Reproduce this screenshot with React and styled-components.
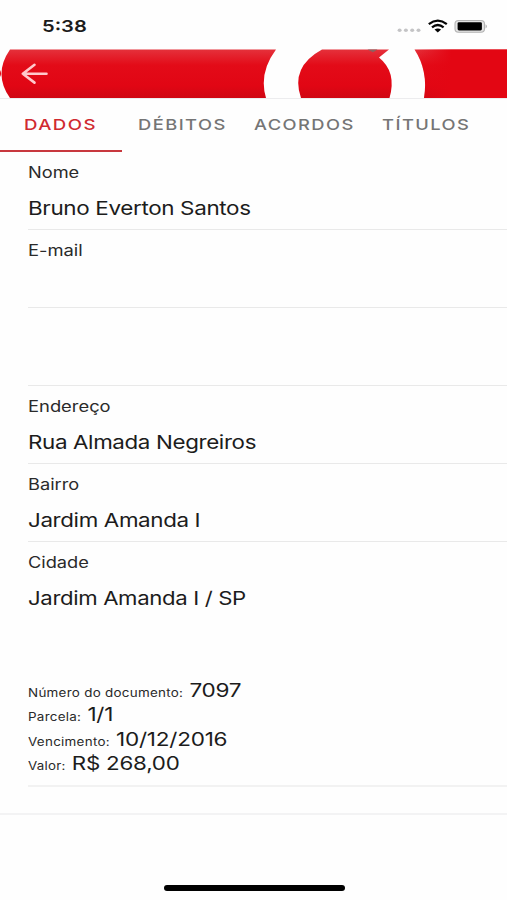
import React from 'react';
import styled, { createGlobalStyle } from 'styled-components';

const GlobalStyle = createGlobalStyle`
  * { box-sizing: border-box; }
  body { margin: 0; background: #fefefe; }
`;

const Screen = styled.div`
  width: 507px;
  height: 900px;
  display: flex;
  flex-direction: column;
  background: #fefefe;
  color: #1c1c1c;
  font-family: Inter, 'Liberation Sans', sans-serif;
  overflow: hidden;
`;

const StatusBar = styled.header`
  height: 49px;
  flex: none;
  display: flex;
  align-items: center;
  justify-content: space-between;
  padding: 3px 19px 0 42px;
`;

const Wide = styled.span`
  display: inline-block;
  white-space: nowrap;
  transform: scaleX(${(p) => p.$x || 1.2});
  transform-origin: ${(p) => p.$origin || 'left'} center;
`;

const Clock = styled(Wide)`
  font-size: 16.5px;
  font-weight: 600;
  line-height: 20px;
`;

const StatusIcons = styled.svg`
  display: block;
  width: 92px;
  height: 20px;
`;

const Banner = styled.div`
  height: 49px;
  flex: none;
`;

const BannerArt = styled.svg`
  display: block;
  width: 507px;
  height: 49px;
`;

const Tabs = styled.nav`
  height: 53.5px;
  flex: none;
  display: grid;
  grid-template-columns: repeat(4, 121.8px);
  border-top: 1px solid #ececee;
`;

const Tab = styled.div`
  display: flex;
  justify-content: center;
  padding-top: 16px;
  font-size: 15px;
  line-height: 20px;
  font-weight: ${(p) => (p.$active ? 500 : 450)};
  letter-spacing: 1.2px;
  color: ${(p) => (p.$active ? '#d02a30' : '#757575')};
  border-bottom: 2px solid ${(p) => (p.$active ? '#c8383e' : 'transparent')};
`;

const Fields = styled.main`
  padding: 0.5px 0 0 28px;
`;

const Field = styled.section`
  height: 78px;
  display: flex;
  flex-direction: column;
  align-items: flex-start;
  padding-top: 11px;
  border-bottom: 1px solid ${(p) => (p.$last ? 'transparent' : '#e9e9e9')};
`;

const Label = styled(Wide)`
  font-size: 15.3px;
  line-height: 20px;
  height: 20px;
  color: #2a2a2a;
`;

const Value = styled(Wide)`
  font-size: 18.8px;
  line-height: 24px;
  margin-top: 14px;
  letter-spacing: -0.3px;
`;

const Details = styled.section`
  margin-top: 59px;
  height: 108px;
  display: flex;
  flex-direction: column;
  align-items: flex-start;
  border-bottom: 2px solid #f2f2f2;
`;

const DetailLine = styled(Wide)`
  height: 24.4px;
  line-height: 24.4px;
  font-size: 18.8px;
  letter-spacing: -0.2px;
`;

const DetailLabel = styled.span`
  font-size: 11.2px;
  letter-spacing: 0.22px;
  margin-right: 5.2px;
  color: #2a2a2a;
`;

const Footer = styled.footer`
  flex: 1;
  margin-top: 26px;
  border-top: 2px solid #f3f3f4;
  display: flex;
  justify-content: center;
  align-items: flex-end;
  padding: 0 0 9px 2px;
`;

const HomeBar = styled.div`
  width: 181px;
  height: 6px;
  border-radius: 3px;
  background: #000;
`;

const tabs = [
  { text: 'DADOS', x: 1.24 },
  { text: 'DÉBITOS', x: 1.22 },
  { text: 'ACORDOS', x: 1.22 },
  { text: 'TÍTULOS', x: 1.22 },
];

const fields = [
  { label: 'Nome', value: 'Bruno Everton Santos', lx: 1.19, vx: 1.195 },
  { label: 'E-mail', value: '', lx: 1.2 },
  { label: '', value: '' },
  { label: 'Endereço', value: 'Rua Almada Negreiros', lx: 1.2, vx: 1.19 },
  { label: 'Bairro', value: 'Jardim Amanda I', lx: 1.19, vx: 1.19 },
  { label: 'Cidade', value: 'Jardim Amanda I / SP', lx: 1.19, vx: 1.18 },
];

const details = [
  { label: 'Número do documento:', value: '7097', x: 1.2 },
  { label: 'Parcela:', value: '1/1', x: 1.2 },
  { label: 'Vencimento:', value: '10/12/2016', x: 1.2 },
  { label: 'Valor:', value: 'R$ 268,00', x: 1.19 },
];

function StatusGlyphs() {
  return (
    <StatusIcons viewBox="396 16 92 20">
      <g fill="#c4c4c6">
        <ellipse cx="399.6" cy="30.2" rx="2" ry="1.7" />
        <ellipse cx="405.9" cy="30.2" rx="2" ry="1.7" />
        <ellipse cx="412.2" cy="30.2" rx="2" ry="1.7" />
        <ellipse cx="418.5" cy="30.2" rx="2" ry="1.7" />
      </g>
      <g fill="none" stroke="#050505" strokeWidth="2.3">
        <path d="M428.8 24.1Q437.8 17.2 446.8 24.1" />
        <path d="M432 27.3Q437.8 22.7 443.6 27.3" />
      </g>
      <path d="M434.5 29.6Q437.8 27.2 441.1 29.6L437.8 32.4Z" fill="#050505" />
      <rect x="455" y="20.5" width="29.5" height="11.8" rx="3.5" fill="#e4e4e4" stroke="#b3b3b3" strokeWidth="1.1" />
      <path d="M485.6 24.2Q488 26.3 485.6 28.4Z" fill="#a5a5a5" />
      <rect x="457.6" y="22.2" width="24.3" height="8.3" rx="1.4" fill="#000" />
    </StatusIcons>
  );
}

function BannerDrawing() {
  return (
    <BannerArt viewBox="0 49 507 49">
      <defs>
        <linearGradient id="red" x1="0" y1="0" x2="0" y2="1">
          <stop offset="0" stopColor="#e5313b" />
          <stop offset="0.32" stopColor="#e30b18" />
          <stop offset="0.75" stopColor="#e10614" />
          <stop offset="1" stopColor="#cf0713" />
        </linearGradient>
        <linearGradient id="redRight" x1="0" y1="0" x2="1" y2="0">
          <stop offset="0" stopColor="#e30613" stopOpacity="0" />
          <stop offset="0.4" stopColor="#e30613" />
        </linearGradient>
      </defs>
      <path d="M0 70Q2 73.5 0 77Z" fill="#e30613" />
      <path d="M10 49.5H276Q258.500 73 266 98H10Q-7 74 10 49.500Z" fill="url(#red)" />
      <path d="M322 49.500H389L379 57.500Q397 72 389.500 98H301Q290 67 322 49.500Z" fill="url(#red)" />
      <path d="M414.500 49.500H507V98H424Q428.500 71 414.500 49.500Z" fill="url(#red)" />
      <path d="M414.500 49.500H507V98H424Q428.500 71 414.500 49.500Z" fill="url(#redRight)" />
      <path d="M367.500 49.500H377.500L373 52.300Z" fill="#8c6260" />
      <path
        d="M46.500 73.700H23M34.500 64.800L22.800 73.700L34.500 82.600"
        fill="none"
        stroke="#ffc9cc"
        strokeWidth="2.600"
        strokeLinecap="round"
        strokeLinejoin="round"
      />
    </BannerArt>
  );
}

export default function App() {
  return (
    <Screen>
      <GlobalStyle />
      <StatusBar>
        <Clock $x={1.22}>5:38</Clock>
        <StatusGlyphs />
      </StatusBar>
      <Banner>
        <BannerDrawing />
      </Banner>
      <Tabs>
        {tabs.map((t, i) => (
          <Tab key={t.text} $active={i === 0}>
            <Wide $x={t.x} $origin="center">{t.text}</Wide>
          </Tab>
        ))}
      </Tabs>
      <Fields>
        {fields.map((f, i) => (
          <Field key={i} $last={i === fields.length - 1}>
            <Label $x={f.lx}>{f.label}</Label>
            <Value $x={f.vx}>{f.value}</Value>
          </Field>
        ))}
        <Details>
          {details.map((d) => (
            <DetailLine key={d.label} $x={d.x}>
              <DetailLabel>{d.label}</DetailLabel>
              {d.value}
            </DetailLine>
          ))}
        </Details>
      </Fields>
      <Footer>
        <HomeBar />
      </Footer>
    </Screen>
  );
}
